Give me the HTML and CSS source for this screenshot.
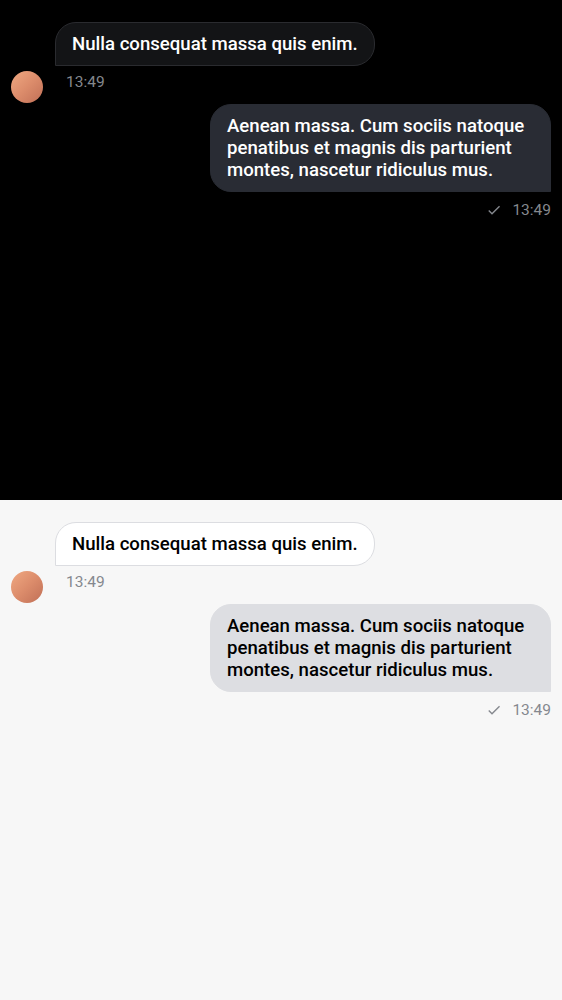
FILE: index.html
```html
<!DOCTYPE html>
<html>
<head>
<meta charset="utf-8">
<link rel="stylesheet" href="styles.css">
</head>
<body>
<section class="pane pane-dark">
  <div class="row row-in">
    <div class="avatar"></div>
    <div class="group">
      <div class="bubble bubble-in">Nulla consequat massa quis enim.</div>
      <div class="meta">13:49</div>
    </div>
  </div>
  <div class="row row-out">
    <div class="group group-out">
      <div class="bubble bubble-out">Aenean massa. Cum sociis natoque penatibus et magnis dis parturient montes, nascetur ridiculus mus.</div>
      <div class="meta meta-out">
        <svg class="check" viewBox="0 0 24 24" width="16" height="16"><path d="M9 16.17L4.83 12l-1.42 1.41L9 19 21 7l-1.41-1.41z"/></svg>
        <span>13:49</span>
      </div>
    </div>
  </div>
</section>
<section class="pane pane-light">
  <div class="row row-in">
    <div class="avatar"></div>
    <div class="group">
      <div class="bubble bubble-in">Nulla consequat massa quis enim.</div>
      <div class="meta">13:49</div>
    </div>
  </div>
  <div class="row row-out">
    <div class="group group-out">
      <div class="bubble bubble-out">Aenean massa. Cum sociis natoque penatibus et magnis dis parturient montes, nascetur ridiculus mus.</div>
      <div class="meta meta-out">
        <svg class="check" viewBox="0 0 24 24" width="16" height="16"><path d="M9 16.17L4.83 12l-1.42 1.41L9 19 21 7l-1.41-1.41z"/></svg>
        <span>13:49</span>
      </div>
    </div>
  </div>
</section>
</body>
</html>
```
FILE: styles.css
```css
* { box-sizing: border-box; }
html, body { margin: 0; padding: 0; }
body {
  font-family: Roboto, "Liberation Sans", sans-serif;
  width: 562px;
}
.pane {
  height: 500px;
  padding: 22px 11px 0;
  overflow: hidden;
}
.pane-dark { background: #000000; }
.pane-light { background: #f7f7f7; }

.row { display: flex; }
.row-in { align-items: flex-end; gap: 12px; }
.row-out { justify-content: flex-end; margin-top: 1px; }

.avatar {
  width: 32px;
  height: 32px;
  border-radius: 50%;
  background: linear-gradient(135deg, #f0a982 0%, #dc8c6b 50%, #c06f56 100%);
  flex: none;
}
.group { display: flex; flex-direction: column; align-items: flex-start; padding-bottom: 11px; }
.group-out { align-items: flex-end; padding-bottom: 0; }

.bubble {
  font-size: 18.6px;
  font-weight: 500;
  line-height: 22px;
  padding: 10px 16px;
  border: 1px solid transparent;
  border-radius: 21px;
}
.bubble-in { border-bottom-left-radius: 0; }
.bubble-out { border-bottom-right-radius: 0; width: 341px; }

.pane-dark .bubble-in { background: #131416; border-color: #2a2b2f; color: #ffffff; }
.pane-dark .bubble-out { background: #292c34; border-color: #292c34; color: #ffffff; }
.pane-light .bubble-in { background: #ffffff; border-color: #dcdde1; color: #000000; }
.pane-light .bubble-out { background: #dddee2; border-color: #dddee2; color: #000000; }

.meta {
  margin-top: 6px;
  padding-left: 11px;
  font-size: 15.5px;
  line-height: 20px;
  color: #85888e;
}
.meta-out {
  display: flex;
  align-items: center;
  gap: 10px;
  height: 24px;
  padding-left: 0;
}
.check { fill: #85888e; display: block; }
```
